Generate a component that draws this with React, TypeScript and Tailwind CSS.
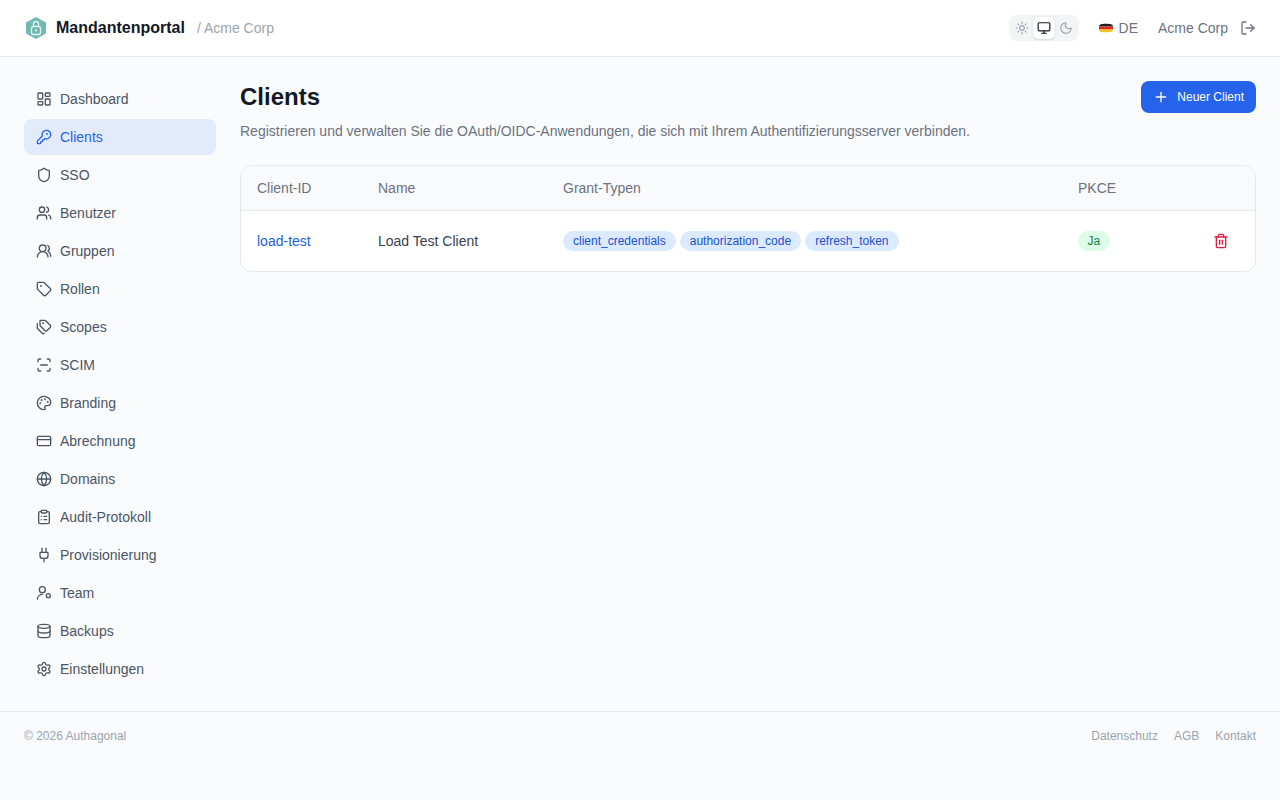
import React from "react";
import {
  LayoutDashboard, KeyRound, Shield, Users, UsersRound, Tag, Tags, ScanLine, Palette, CreditCard, Globe,
  ClipboardList, Plug, Database, Settings, Sun, Monitor, Moon, LogOut, Plus, Trash2,
} from "lucide-react";

function TeamIcon({ size = 16 }: { size?: number }) {
  return (
    <svg width={size} height={size} viewBox="0 0 24 24" fill="none" stroke="currentColor" strokeWidth="2" strokeLinecap="round" strokeLinejoin="round">
      <circle cx="9.5" cy="7" r="4.5" />
      <path d="M2 21a8 8 0 0 1 8-7" />
      <circle cx="18.5" cy="16" r="3" />
    </svg>
  );
}

const nav = [
  ["Dashboard", LayoutDashboard], ["Clients", KeyRound], ["SSO", Shield], ["Benutzer", Users], ["Gruppen", UsersRound],
  ["Rollen", Tag], ["Scopes", Tags], ["SCIM", ScanLine], ["Branding", Palette], ["Abrechnung", CreditCard],
  ["Domains", Globe], ["Audit-Protokoll", ClipboardList], ["Provisionierung", Plug], ["Team", TeamIcon],
  ["Backups", Database], ["Einstellungen", Settings],
] as const;

function Logo() {
  return (
    <svg width="24" height="24" viewBox="0 0 24 24">
      <path d="M12 1 22 6.5V17.5L12 23 2 17.5V6.5Z" fill="#6FB9B1" />
      <rect x="7.5" y="10.5" width="9" height="8" rx="2" fill="none" stroke="#E6F4F2" strokeWidth="1.3" />
      <path d="M9.5 10.5V8a2.5 2.5 0 0 1 5 0V10.5" fill="none" stroke="#E6F4F2" strokeWidth="1.3" />
      <circle cx="12" cy="14.5" r="1.1" fill="#E6F4F2" />
    </svg>
  );
}

function Flag() {
  return (
    <svg width="14" height="10" viewBox="0 0 14 10" className="shrink-0">
      <path d="M0 3.5C0 1.5 2 .7 7 .7s7 .8 7 2.8Z" fill="#1f1f1f" />
      <rect y="3.5" width="14" height="3" fill="#DD2A1F" />
      <path d="M0 6.5C0 8.5 2 9.3 7 9.3s7-.8 7-2.8Z" fill="#F6C21B" />
    </svg>
  );
}

export default function App() {
  return (
    <div className="min-h-[800px] flex flex-col text-[14px] font-['Liberation_Sans',Arial,sans-serif] bg-[#f9fbfd]">
      <header className="h-[57px] shrink-0 bg-white border-b border-[#e5e7eb] px-6 flex items-center justify-between">
        <div className="flex items-center">
          <Logo />
          <span className="ml-[8px] text-[16px] font-bold text-[#111827]">Mandantenportal</span>
          <span className="ml-3 text-[14px] text-[#9ca3af]">/ Acme Corp</span>
        </div>
        <div className="flex items-center">
          <div className="flex items-center h-[26px] rounded-lg bg-[#f3f4f6] p-[2px]">
            <span className="w-[22px] h-[22px] flex items-center justify-center text-[#9ca3af]"><Sun size={14} /></span>
            <span className="w-[22px] h-[22px] flex items-center justify-center rounded-md bg-white text-[#111827] shadow-sm"><Monitor size={14} /></span>
            <span className="w-[22px] h-[22px] flex items-center justify-center text-[#9ca3af]"><Moon size={14} /></span>
          </div>
          <div className="ml-5 flex items-center gap-[6px] text-[#6b7280]"><Flag /><span>DE</span></div>
          <span className="ml-5 text-[#6b7280]">Acme Corp</span>
          <LogOut size={16} className="ml-3 text-[#6b7280]" />
        </div>
      </header>

      <div className="flex-1 flex px-6 pt-6">
        <nav className="w-[192px] shrink-0 flex flex-col gap-[2px]">
          {nav.map(([label, Icon]) => {
            const active = label === "Clients";
            return (
              <div key={label} className={active ? "h-9 px-3 flex items-center gap-2 rounded-lg bg-[#e3eafb] text-[#2563eb]" : "h-9 px-3 flex items-center gap-2 rounded-lg text-[#4b5563]"}>
                <Icon size={16} />
                <span>{label}</span>
              </div>
            );
          })}
        </nav>
        <main className="flex-1 ml-6 min-w-0">
          <div className="flex items-start justify-between">
            <div>
              <h1 className="text-[24px] leading-8 font-bold text-[#111827]">Clients</h1>
              <p className="mt-2 text-[#6b7280]">Registrieren und verwalten Sie die OAuth/OIDC-Anwendungen, die sich mit Ihrem Authentifizierungsserver verbinden.</p>
            </div>
            <button className="h-8 px-3 flex items-center gap-2 rounded-lg bg-[#2563eb] text-white text-[12px]">
              <Plus size={16} />
              Neuer Client
            </button>
          </div>
          <div className="mt-[23px] rounded-xl border border-[#e5e7eb] bg-white overflow-hidden">
            <div className="h-[45px] flex items-center bg-[#f9fafb] border-b border-[#e5e7eb] text-[#6b7280]">
              <div className="w-[121px] pl-4">Client-ID</div>
              <div className="w-[185px] pl-4">Name</div>
              <div className="w-[515px] pl-4">Grant-Typen</div>
              <div className="pl-4">PKCE</div>
            </div>
            <div className="h-[60px] flex items-center">
              <div className="w-[121px] pl-4 text-[#1d5fd6]">load-test</div>
              <div className="w-[185px] pl-4 text-[#374151]">Load Test Client</div>
              <div className="w-[515px] pl-4 flex gap-1">
                {["client_credentials", "authorization_code", "refresh_token"].map((g) => (
                  <span key={g} className="h-5 px-[10px] flex items-center rounded-full bg-[#dbeafe] text-[#1d4ed8] text-[12px]">{g}</span>
                ))}
              </div>
              <div className="pl-4 flex-1 flex items-center justify-between pr-[26px]">
                <span className="h-5 px-[9.5px] flex items-center rounded-full bg-[#dcfce7] text-[#15803d] text-[12px]">Ja</span>
                <Trash2 size={16} className="text-[#e11d3c]" />
              </div>
            </div>
          </div>
        </main>
      </div>

      <footer className="h-[89px] shrink-0 border-t border-[#e5e7eb] px-6 pt-[15px] flex justify-between text-[12px] text-[#9ca3af]">
        <span>© 2026 Authagonal</span>
        <div className="flex gap-4"><span>Datenschutz</span><span>AGB</span><span>Kontakt</span></div>
      </footer>
    </div>
  );
}
